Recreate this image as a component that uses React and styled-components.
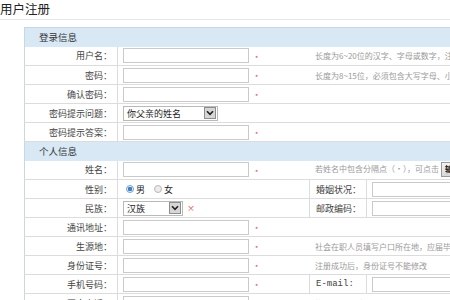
import React from 'react'
import styled, { createGlobalStyle } from 'styled-components'

const Global = createGlobalStyle`
  html, body {
    margin: 0;
    padding: 0;
    background: #fff;
    overflow: hidden;
  }
  body {
    font-family: "Noto Sans CJK SC", "Noto Sans", sans-serif;
    color: #333;
  }
`

const Page = styled.div`
  width: 450px;
  height: 300px;
  overflow: hidden;
`

const Title = styled.h1`
  margin: 0;
  height: 19px;
  line-height: 18px;
  font-size: 12.5px;
  font-weight: normal;
  color: #222;
  border-bottom: 1px solid #e6e6e6;
`

const Table = styled.table`
  margin: 7px 0 0 24px;
  width: 542px;
  table-layout: fixed;
  border-collapse: collapse;
  font-size: 9px;
  border-left: 1px solid #c9d7e3;
`

const Row = styled.tr`
  height: 19px;
`

const Head = styled.td`
  background: #d8e8f4;
  border-top: 1px solid #c9d7e3;
  padding: 0 0 0 14px;
  font-size: 9.5px;
  color: #333;
`

const Label = styled.td`
  text-align: right;
  padding: 0 5px 0 0;
  border-bottom: 1px solid #dcdcdc;
  border-right: 1px solid #dcdcdc;
  white-space: nowrap;
  color: #444;
`

const SubLabel = styled.td`
  padding: 0 0 0 6px;
  border: 1px solid #dcdcdc;
  white-space: nowrap;
  color: #444;
  font-family: ${({ mono }) => (mono ? '"Liberation Mono", monospace' : 'inherit')};
  font-size: 9px;
`

const Value = styled.td`
  padding: 0 0 0 5px;
  border-bottom: 1px solid #dcdcdc;
  white-space: nowrap;
  overflow: hidden;
`

const Line = styled.div`
  display: flex;
  align-items: center;
`

const Slot = styled.div`
  display: flex;
  align-items: center;
  flex: none;
  width: 186px;
`

const Input = styled.div`
  box-sizing: border-box;
  width: ${({ w }) => w || 126}px;
  height: 15px;
  border: 1px solid #cacaca;
  background: #fff;
`

const Req = styled.span`
  margin-left: ${({ gap }) => gap || 6}px;
  padding-top: ${({ cross }) => (cross ? 0 : 5)}px;
  color: #e23b4a;
  font-size: ${({ cross }) => (cross ? '8px' : '7px')};
  line-height: 1;
`

const Hint = styled.span`
  padding-left: 6px;
  color: #9a9a9a;
  font-size: 8px;
  white-space: nowrap;
`

const Button = styled.span`
  display: inline-block;
  margin-left: 2px;
  padding: 0 3px;
  height: 13px;
  line-height: 12px;
  border: 1px solid #9a9a9a;
  background: linear-gradient(#f4f4f4, #d8d8d8);
  color: #222;
  font-weight: bold;
  font-size: 8px;
`

const Select = styled.div`
  box-sizing: border-box;
  width: ${({ w }) => w}px;
  height: 15px;
  border: 1px solid #b9b9b9;
  display: flex;
  align-items: center;
  justify-content: space-between;
  padding-left: 3px;
  font-size: 9px;
  color: #222;
`

const Arrow = styled.span`
  box-sizing: border-box;
  width: 12px;
  height: 12px;
  margin-right: 1px;
  border: 1px solid #8e8e8e;
  background: #d6d6d6;
  display: flex;
  align-items: center;
  justify-content: center;
`

const Radio = styled.span`
  box-sizing: border-box;
  display: inline-block;
  width: 8px;
  height: 8px;
  border-radius: 50%;
  border: 1px solid ${({ on }) => (on ? '#7aa4cf' : '#b8b8b8')};
  background: ${({ on }) => (on ? 'radial-gradient(circle, #3d7fc4 0 2px, #e8f0f8 2.5px)' : '#ececec')};
  margin: 0 2px 0 ${({ first }) => (first ? 3 : 9)}px;
`

const Choice = styled.span`
  font-size: 9px;
  color: #222;
`

const Dropdown = ({ w, text }) => (
  <Select w={w}>
    <span>{text}</span>
    <Arrow>
      <svg width="8" height="6" viewBox="0 0 8 6">
        <path d="M1 1.2 L4 4.4 L7 1.2" fill="none" stroke="#222" strokeWidth="1.6" />
      </svg>
    </Arrow>
  </Select>
)

const Field = ({ label, hint, extra }) => (
  <Row>
    <Label>{label}</Label>
    <Value colSpan={3}>
      <Line>
        <Slot>
          <Input />
          <Req>*</Req>
        </Slot>
        {hint && <Hint>{hint}{extra}</Hint>}
      </Line>
    </Value>
  </Row>
)

const App = () => (
  <Page>
    <Global />
    <Title>用户注册</Title>
    <Table>
      <colgroup>
        <col style={{ width: 93 }} />
        <col style={{ width: 192 }} />
        <col style={{ width: 57 }} />
        <col style={{ width: 200 }} />
      </colgroup>
      <tbody>
        <Row>
          <Head colSpan={4}>登录信息</Head>
        </Row>
        <Field label="用户名：" hint="长度为6~20位的汉字、字母或数字，注册后不可更改" />
        <Field label="密码：" hint="长度为8~15位，必须包含大写字母、小写字母和数字" />
        <Field label="确认密码：" />
        <Row>
          <Label>密码提示问题：</Label>
          <Value colSpan={3}>
            <Dropdown w={95} text="你父亲的姓名" />
          </Value>
        </Row>
        <Field label="密码提示答案：" />
        <Row>
          <Head colSpan={4}>个人信息</Head>
        </Row>
        <Field
          label="姓名："
          hint="若姓名中包含分隔点（·），可点击"
          extra={<Button>输入</Button>}
        />
        <Row>
          <Label>性别：</Label>
          <Value>
            <Line>
              <Radio on first />
              <Choice>男</Choice>
              <Radio />
              <Choice>女</Choice>
            </Line>
          </Value>
          <SubLabel>婚姻状况：</SubLabel>
          <Value>
            <Input w={180} />
          </Value>
        </Row>
        <Row>
          <Label>民族：</Label>
          <Value>
            <Line>
              <Dropdown w={60} text="汉族" />
              <Req gap={4} cross>×</Req>
            </Line>
          </Value>
          <SubLabel>邮政编码：</SubLabel>
          <Value>
            <Input w={180} />
          </Value>
        </Row>
        <Field label="通讯地址：" />
        <Field label="生源地：" hint="社会在职人员填写户口所在地，应届毕业生填写生源地" />
        <Field label="身份证号：" hint="注册成功后，身份证号不能修改" />
        <Row>
          <Label>手机号码：</Label>
          <Value>
            <Line>
              <Slot>
                <Input />
                <Req>*</Req>
              </Slot>
            </Line>
          </Value>
          <SubLabel mono>E-mail:</SubLabel>
          <Value>
            <Input w={180} />
          </Value>
        </Row>
        <Field label="固定电话：" hint="格式：区号-电话号码-分机号" />
      </tbody>
    </Table>
  </Page>
)

export default App
